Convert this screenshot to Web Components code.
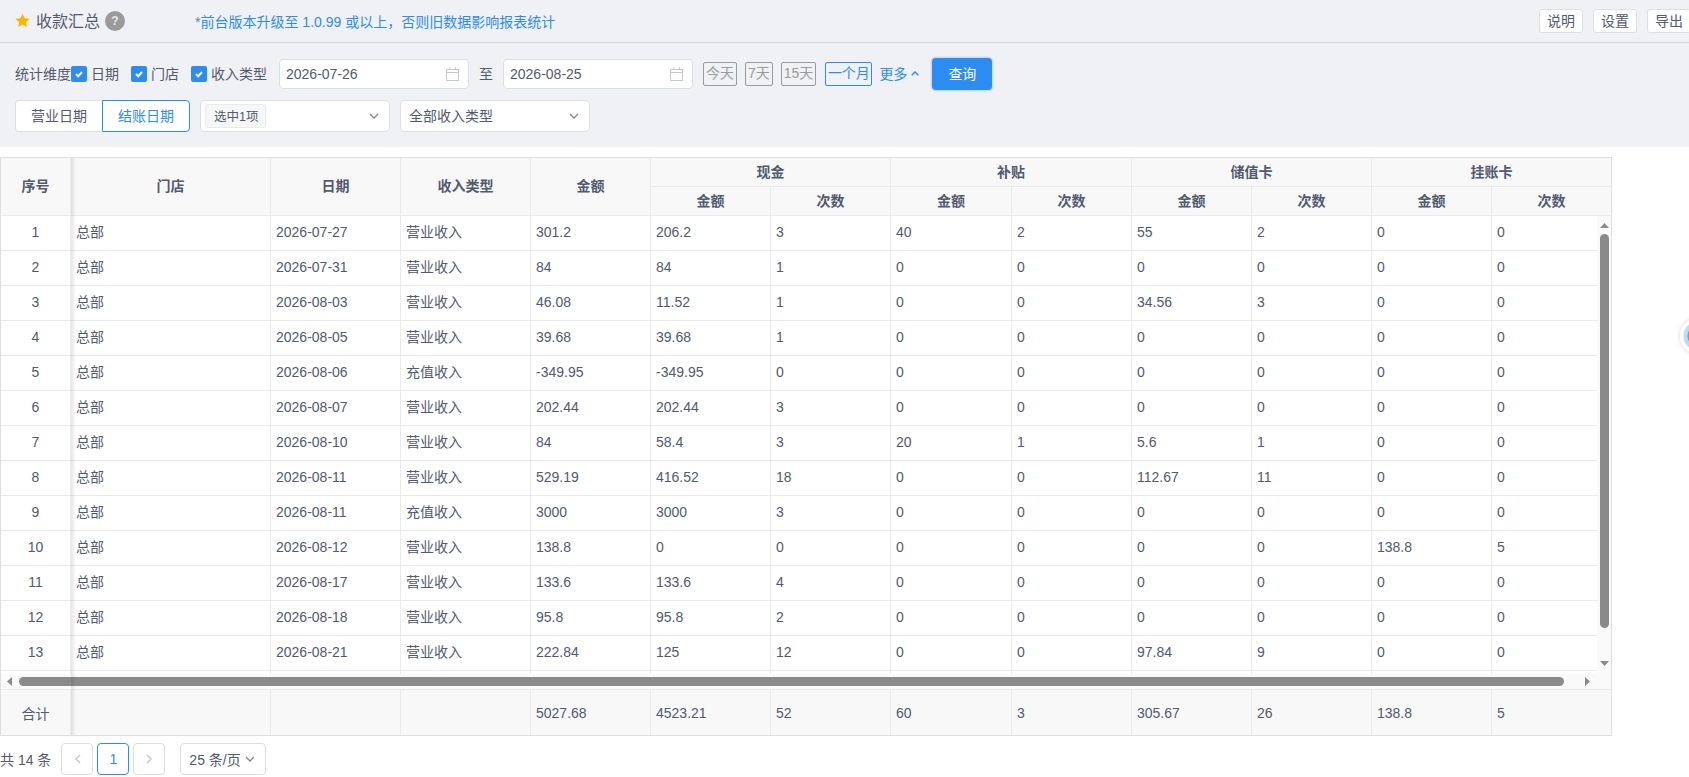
<!DOCTYPE html>
<html lang="zh">
<head>
<meta charset="utf-8">
<title>收款汇总</title>
<style>
    html, body {
        margin: 0;
        height: 100%;
        overflow: hidden;
        background: #fff;
        color: #515a6e;
        font: 14px "Liberation Sans", "Noto Sans CJK SC", sans-serif;
    }
</style>
</head>
<body>
<report-page></report-page>

<script>
const CHEVRON_DOWN = `<svg width="10" height="6" viewBox="0 0 10 6"><path d="M1 1l4 4 4-4" fill="none" stroke="#808695" stroke-width="1.3"/></svg>`;

// -- all elements use the same way to open their shadow
class BaseElement extends HTMLElement {
    constructor() {
        super();
        const template = document.createElement('template');
        template.innerHTML = this.constructor.TEMPLATE;
        this.shadow = this.attachShadow({ mode: 'open' });
        this.shadow.appendChild(template.content.cloneNode(true));
    }
}

class UiButton extends BaseElement {
    static TEMPLATE = `
<style>
    :host {
        display: inline-flex;
        align-items: center;
        justify-content: center;
        flex-shrink: 0;
        box-sizing: border-box;
        width: 44px;
        height: 24px;
        padding-bottom: 2px;
        background: #fff;
        border: 1px solid #dcdee2;
        border-radius: 3px;
        color: #515a6e;
    }
</style>
<slot></slot>`;
}

class UiCheck extends BaseElement {
    static TEMPLATE = `
<style>
    :host {
        display: inline-flex;
        align-items: center;
        flex-shrink: 0;
    }
    .box {
        display: flex;
        align-items: center;
        justify-content: center;
        width: 16px;
        height: 16px;
        margin-right: 4px;
        background: #2d8cf0;
        border-radius: 2px;
    }
    .text { padding-bottom: 2px; }
</style>
<span class="box">
    <svg width="10" height="8" viewBox="0 0 10 8"><path d="M2 4l2.200 2.200L8 2" fill="none" stroke="#fff" stroke-width="2"/></svg>
</span>
<span class="text"><slot></slot></span>`;
}

class DateInput extends BaseElement {
    static TEMPLATE = `
<style>
    :host {
        display: flex;
        align-items: center;
        justify-content: space-between;
        flex-shrink: 0;
        box-sizing: border-box;
        width: 190px;
        height: 30px;
        padding: 0 9px 0 6px;
        background: #fff;
        border: 1px solid #dcdee2;
        border-radius: 4px;
    }
    svg { display: block; }
</style>
<slot></slot>
<svg width="13" height="14" viewBox="0 0 13 14" fill="none" stroke="#c5c8ce">
    <rect x="0.5" y="2.5" width="12" height="11"/>
    <path d="M0.5 5.5h12M3.5 0.5v2M9.5 0.5v2" stroke="#cdbfd0"/>
</svg>`;
}

class UiSelect extends BaseElement {
    static TEMPLATE = `
<style>
    :host {
        display: flex;
        align-items: center;
        justify-content: space-between;
        flex-shrink: 0;
        box-sizing: border-box;
        width: 190px;
        height: 32px;
        padding: 0 10px 0 8px;
        background: #fff;
        border: 1px solid #dcdee2;
        border-radius: 4px;
    }
    #text { padding-bottom: 2px; }
    .tag {
        display: none;
    }
    :host([tag]) {
        padding-left: 4px;
    }
    :host([tag]) .tag {
        display: flex;
        align-items: center;
        box-sizing: border-box;
        width: 61px;
        height: 24px;
        padding: 0 0 1px 8px;
        background: #f7f7f7;
        border: 1px solid #e8eaec;
        border-radius: 3px;
        font-size: 12.5px;
    }
</style>
<span class="tag"><slot></slot></span>
<span id="text"></span>
${CHEVRON_DOWN}`;

    connectedCallback() {
        if (!this.hasAttribute('tag')) {
            this.shadow.getElementById('text').textContent = this.textContent;
        }
    }
}

class SegmentSwitch extends BaseElement {
    static TEMPLATE = `
<style>
    :host {
        display: flex;
        flex-shrink: 0;
        box-sizing: border-box;
        width: 175px;
        height: 32px;
        background: #fff;
        border-radius: 4px;
    }
    span {
        display: flex;
        align-items: center;
        justify-content: center;
        box-sizing: border-box;
        width: 87px;
        padding-bottom: 2px;
        border: 1px solid #dcdee2;
        border-right: 0;
        border-radius: 4px 0 0 4px;
    }
    .on {
        width: 88px;
        color: #2d8cf0;
        border: 1px solid #2d8cf0;
        border-radius: 0 4px 4px 0;
    }
</style>
<span>营业日期</span>
<span class="on">结账日期</span>`;
}

class QuickRange extends BaseElement {
    static TEMPLATE = `
<style>
    :host {
        display: flex;
        align-items: center;
        gap: 8px;
        flex-shrink: 0;
    }
    span {
        box-sizing: border-box;
        height: 24px;
        padding: 0 2px;
        line-height: 20px;
        color: #9a9a9a;
        border: 1px solid #9a9a9a;
        border-radius: 2px;
    }
    .on {
        margin-left: 1px;
        padding: 0 1.5px;
        color: #2d8cf0;
        border-color: #2d8cf0;
    }
</style>
<span>今天</span>
<span>7天</span>
<span>15天</span>
<span class="on">一个月</span>`;
}

class PageHead extends BaseElement {
    static TEMPLATE = `
<style>
    :host {
        display: flex;
        align-items: center;
        box-sizing: border-box;
        height: 43px;
        padding-left: 15px;
        background: #f0f1f5;
        border-bottom: 1px solid #d7d2d6;
    }
    .star { margin-right: 6px; display: block; margin-top: -2px; }
    .title {
        padding-bottom: 3px;
        font-size: 16px;
    }
    .help {
        display: flex;
        align-items: center;
        justify-content: center;
        width: 20px;
        height: 20px;
        margin-left: 5px;
        background: #9a9a9a;
        border-radius: 50%;
        color: #e8e8e8;
        font-size: 12px;
        font-weight: bold;
    }
    .notice {
        margin-left: 70px;
        padding-bottom: 1px;
        color: #2d8cf0;
    }
    .actions {
        display: flex;
        gap: 10px;
        margin-left: auto;
        margin-right: -2px;
        flex-shrink: 0;
    }
</style>
<svg class="star" width="15" height="15" viewBox="0 0 20 20"><path d="M10 .8l2.8 6.2 6.7.7-5 4.500 1.400 6.600L10 15.400l-5.900 3.400 1.400-6.600-5-4.500 6.700-.7z" fill="#ffb400"/></svg>
<span class="title">收款汇总</span>
<span class="help">?</span>
<span class="notice">*前台版本升级至 1.0.99 或以上，否则旧数据影响报表统计</span>
<span class="actions">
    <ui-button>说明</ui-button>
    <ui-button>设置</ui-button>
    <ui-button>导出</ui-button>
</span>`;
}

class FilterBar extends BaseElement {
    static TEMPLATE = `
<style>
    :host {
        display: flex;
        flex-direction: column;
        gap: 10px;
        box-sizing: border-box;
        height: 104px;
        padding: 15px;
        background: #f0f1f5;
    }
    .row {
        display: flex;
        align-items: center;
        height: 32px;
    }
    .label { padding-bottom: 2px; }
    .more {
        display: flex;
        align-items: center;
        gap: 4px;
        margin-left: 7px;
        padding-bottom: 2px;
        color: #2d8cf0;
        flex-shrink: 0;
    }
    .query {
        display: flex;
        align-items: center;
        justify-content: center;
        box-sizing: border-box;
        width: 60px;
        height: 32px;
        margin-left: 13px;
        padding-bottom: 2px;
        background: #2d8cf0;
        border-radius: 4px;
        box-shadow: 0 0 0 1.5px rgba(45, 140, 240, .2);
        color: #fff;
        flex-shrink: 0;
    }
    .ml12 { margin-left: 12px; }
    .ml10 { margin-left: 10px; }
</style>
<div class="row">
    <span class="label">统计维度</span>
    <ui-check>日期</ui-check>
    <ui-check class="ml12">门店</ui-check>
    <ui-check class="ml12">收入类型</ui-check>
    <date-input class="ml12">2026-07-26</date-input>
    <span class="label ml10">至</span>
    <date-input class="ml10">2026-08-25</date-input>
    <quick-range class="ml10"></quick-range>
    <span class="more">更多
        <svg width="8" height="5" viewBox="0 0 8 5"><path d="M.7 4.300L4 1l3.300 3.300" fill="none" stroke="#2d8cf0" stroke-width="1.400"/></svg>
    </span>
    <span class="query">查询</span>
</div>
<div class="row">
    <segment-switch></segment-switch>
    <ui-select class="ml10" tag>选中1项</ui-select>
    <ui-select class="ml10">全部收入类型</ui-select>
</div>`;
}

class ScrollBar extends BaseElement {
    static TEMPLATE = `
<style>
    :host {
        display: flex;
        flex-shrink: 0;
        box-sizing: border-box;
        background: #fafafa;
    }
    :host([orient="v"]) {
        flex-direction: column;
        align-items: center;
        width: 14px;
        padding: 7px 0 8px 1px;
    }
    :host([orient="h"]) {
        height: 15px;
        padding: 3px 21px 0 6px;
    }
    .thumb {
        background: #8a8a8a;
        border-radius: 5px;
    }
    :host([orient="v"]) .thumb {
        width: 9px;
        height: 394px;
        margin-top: 6px;
    }
    :host([orient="h"]) .thumb {
        width: 1545px;
        height: 9px;
        margin-left: 7px;
    }
    svg { display: block; }
    .end { margin: auto 0 0 0; }
    :host([orient="h"]) .end { margin: 0 0 0 auto; }
</style>
<svg id="a1" fill="#8a8a8a"><path id="p1"/></svg>
<div class="thumb"></div>
<svg id="a2" class="end" fill="#8a8a8a"><path id="p2"/></svg>`;

    connectedCallback() {
        const vertical = this.getAttribute('orient') === 'v';
        const set = (id, w, h, d) => {
            const svg = this.shadow.getElementById('a' + id);
            svg.setAttribute('width', w);
            svg.setAttribute('height', h);
            this.shadow.getElementById('p' + id).setAttribute('d', d);
        };
        if (vertical) {
            set(1, 9, 5, 'M4.5 0L9 5H0z');
            set(2, 9, 5, 'M0 0h9L4.500 5z');
        } else {
            set(1, 5, 9, 'M5 0v9L0 4.500z');
            set(2, 5, 9, 'M0 0l5 4.500L0 9z');
        }
    }
}

class SummaryTable extends BaseElement {
    static TEMPLATE = `
<style>
    :host {
        display: block;
        position: relative;
        box-sizing: border-box;
        width: 1612px;
        margin-top: 10px;
        border: 1px solid #dcdee2;
        --cols: 70px 200px repeat(2, 130px) repeat(3, 120px) 121px repeat(4, 120px) 119px;
    }
    .head, .row, .foot {
        display: grid;
        grid-template-columns: var(--cols);
        width: 1610px;
    }
    .cell {
        display: flex;
        align-items: center;
        box-sizing: border-box;
        padding: 0 0 2px 5px;
        border-right: 1px solid #e8eaec;
        border-bottom: 1px solid #e8eaec;
        white-space: nowrap;
        overflow: hidden;
    }
    .center {
        justify-content: center;
        padding-left: 0;
    }
    .cjk { padding-bottom: 4px; }
    .head {
        grid-template-rows: 29px 29px;
        background: #f8f8f9;
        font-weight: bold;
    }
    .head .cell { padding-bottom: 3px; }
    .head .span2 { padding-bottom: 4px; }
    .span2 { grid-row: span 2; }
    .span-c2 { grid-column: span 2; }
    .last { border-right: 0; }
    .row { height: 35px; }
    .middle {
        display: flex;
    }
    .viewport {
        width: 1596px;
        height: 458px;
        overflow: hidden;
    }
    .foot {
        background: #f8f8f9;
        border-top: 1px solid #e8eaec;
        height: 45px;
    }
    .foot .cell { border-bottom: 0; padding-bottom: 0; }
    .fixed-shadow {
        position: absolute;
        left: 70px;
        top: 0;
        bottom: 0;
        width: 5px;
        background: linear-gradient(to right, rgba(0, 0, 0, .1), rgba(0, 0, 0, 0));
    }
</style>
<div class="head" id="head"></div>
<div class="middle">
    <div class="viewport" id="viewport"></div>
    <scroll-bar orient="v"></scroll-bar>
</div>
<scroll-bar orient="h"></scroll-bar>
<div class="foot" id="foot"></div>
<div class="fixed-shadow"></div>`;

    static DATA = [
        ['2026-07-27', '营业收入', '301.2', '206.2', '3', '40', '2', '55', '2', '0', '0'],
        ['2026-07-31', '营业收入', '84', '84', '1', '0', '0', '0', '0', '0', '0'],
        ['2026-08-03', '营业收入', '46.08', '11.52', '1', '0', '0', '34.56', '3', '0', '0'],
        ['2026-08-05', '营业收入', '39.68', '39.68', '1', '0', '0', '0', '0', '0', '0'],
        ['2026-08-06', '充值收入', '-349.95', '-349.95', '0', '0', '0', '0', '0', '0', '0'],
        ['2026-08-07', '营业收入', '202.44', '202.44', '3', '0', '0', '0', '0', '0', '0'],
        ['2026-08-10', '营业收入', '84', '58.4', '3', '20', '1', '5.6', '1', '0', '0'],
        ['2026-08-11', '营业收入', '529.19', '416.52', '18', '0', '0', '112.67', '11', '0', '0'],
        ['2026-08-11', '充值收入', '3000', '3000', '3', '0', '0', '0', '0', '0', '0'],
        ['2026-08-12', '营业收入', '138.8', '0', '0', '0', '0', '0', '0', '138.8', '5'],
        ['2026-08-17', '营业收入', '133.6', '133.6', '4', '0', '0', '0', '0', '0', '0'],
        ['2026-08-18', '营业收入', '95.8', '95.8', '2', '0', '0', '0', '0', '0', '0'],
        ['2026-08-21', '营业收入', '222.84', '125', '12', '0', '0', '97.84', '9', '0', '0'],
    ];

    connectedCallback() {
        this.renderHead();
        this.renderRows();
        this.renderFoot();
    }

    renderHead() {
        let html = '';
        ['序号', '门店', '日期', '收入类型', '金额'].forEach(name => {
            html += `<div class="cell center span2">${name}</div>`;
        });
        ['现金', '补贴', '储值卡', '挂账卡'].forEach((name, i) => {
            html += `<div class="cell center span-c2 ${i === 3 ? 'last' : ''}">${name}</div>`;
        });
        for (let i = 0; i < 4; i++) {
            html += `<div class="cell center">金额</div>`;
            html += `<div class="cell center ${i === 3 ? 'last' : ''}">次数</div>`;
        }
        this.shadow.getElementById('head').innerHTML = html;
    }

    renderRows() {
        let html = '';
        SummaryTable.DATA.forEach((row, i) => {
            html += `<div class="row"><div class="cell center">${i + 1}</div><div class="cell cjk">总部</div>`;
            row.forEach((v, j) => {
                html += `<div class="cell ${j === 1 ? 'cjk' : ''}">${v}</div>`;
            });
            html += '</div>';
        });

        // -- row 14 is clipped, only its first pixels show
        html += '<div class="row">' + '<div class="cell"></div>'.repeat(13) + '</div>';
        this.shadow.getElementById('viewport').innerHTML = html;
    }

    renderFoot() {
        const list = ['', '', '', '5027.68', '4523.21', '52', '60', '3', '305.67', '26', '138.8', '5'];
        let html = '<div class="cell center">合计</div>';
        list.forEach((v, i) => {
            html += `<div class="cell ${i === list.length - 1 ? 'last' : ''}">${v}</div>`;
        });
        this.shadow.getElementById('foot').innerHTML = html;
    }
}

class PageBar extends BaseElement {
    static TEMPLATE = `
<style>
    :host {
        display: flex;
        align-items: center;
        height: 32px;
        margin-top: 7px;
    }
    .btn {
        display: flex;
        align-items: center;
        justify-content: center;
        box-sizing: border-box;
        width: 32px;
        height: 32px;
        margin-left: 4px;
        background: #fff;
        border: 1px solid #dcdee2;
        border-radius: 4px;
    }
    .first { margin-left: 10px; }
    .on {
        color: #2d8cf0;
        border-color: #2d8cf0;
    }
    .size {
        display: flex;
        align-items: center;
        justify-content: space-between;
        box-sizing: border-box;
        width: 86px;
        height: 32px;
        margin-left: 15px;
        padding: 0 10px 0 8px;
        border: 1px solid #dcdee2;
        border-radius: 4px;
    }
</style>
<span>共 14 条</span>
<span class="btn first">
    <svg width="7" height="10" viewBox="0 0 7 10"><path d="M6 1L2 5l4 4" fill="none" stroke="#c5c8ce" stroke-width="1.500"/></svg>
</span>
<span class="btn on">1</span>
<span class="btn">
    <svg width="7" height="10" viewBox="0 0 7 10"><path d="M1 1l4 4-4 4" fill="none" stroke="#c5c8ce" stroke-width="1.500"/></svg>
</span>
<span class="size">25 条/页 ${CHEVRON_DOWN}</span>`;
}

class FloatBall extends BaseElement {
    static TEMPLATE = `
<style>
    :host {
        display: block;
        position: fixed;
        left: 1680px;
        top: 318px;
        width: 36px;
        height: 36px;
        border-radius: 50%;
        background: radial-gradient(circle, #8f9aa6 0, #8f9aa6 10px, #b7dcfb 11px, #b7dcfb 14px, #fff 15px);
        box-shadow: 0 0 4px rgba(0, 0, 0, .2);
    }
</style>`;
}

class ReportPage extends BaseElement {
    static TEMPLATE = `
<style>
    :host {
        display: block;
        width: 1689px;
        height: 777px;
        overflow: hidden;
    }
</style>
<page-head></page-head>
<filter-bar></filter-bar>
<summary-table></summary-table>
<page-bar></page-bar>
<float-ball></float-ball>`;
}

customElements.define('ui-button', UiButton);
customElements.define('ui-check', UiCheck);
customElements.define('date-input', DateInput);
customElements.define('ui-select', UiSelect);
customElements.define('segment-switch', SegmentSwitch);
customElements.define('quick-range', QuickRange);
customElements.define('page-head', PageHead);
customElements.define('filter-bar', FilterBar);
customElements.define('scroll-bar', ScrollBar);
customElements.define('summary-table', SummaryTable);
customElements.define('page-bar', PageBar);
customElements.define('float-ball', FloatBall);
customElements.define('report-page', ReportPage);
</script>
</body>
</html>
